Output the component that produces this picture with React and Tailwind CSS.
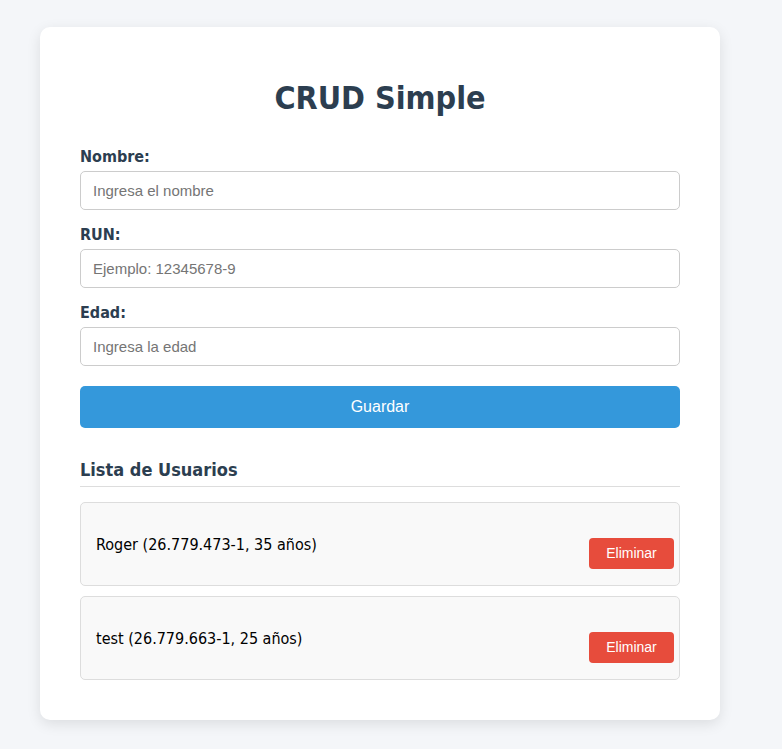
import React from "react";

const users = [
  { name: "Roger", run: "26.779.473-1", age: 35 },
  { name: "test", run: "26.779.663-1", age: 25 },
];

function Field({ label, placeholder }) {
  return (
    <div className="mb-[15px]">
      <label className="block mb-[5px] text-[16px] leading-[19px] font-bold text-[#2c3e50] [font-family:'DejaVu_Sans_Condensed','DejaVu_Sans',sans-serif]">
        {label}
      </label>
      <input
        placeholder={placeholder}
        className="w-full h-[39px] px-3 rounded-[5px] border border-[#cccccc] bg-white text-[15px] text-[#333] placeholder:text-[#757575] outline-none [font-family:'Liberation_Sans',Arial,sans-serif]"
      />
    </div>
  );
}

export default function App() {
  return (
    <div className="min-h-[749px] bg-[#f4f6f9] pt-[27px] pb-[29px]">
      <div className="ml-[40px] w-[680px] bg-white rounded-[10px] shadow-[0_4px_14px_rgba(0,0,0,0.1)] px-[40px] pt-[40px] pb-[40px]">
        <h1 className="text-center text-[32px] leading-[38px] font-bold text-[#2c3e50] mt-[12px] mb-[30px] [font-family:'DejaVu_Sans_Condensed','DejaVu_Sans',sans-serif]">
          CRUD Simple
        </h1>
        <Field label="Nombre:" placeholder="Ingresa el nombre" />
        <Field label="RUN:" placeholder="Ejemplo: 12345678-9" />
        <Field label="Edad:" placeholder="Ingresa la edad" />
        <button className="mt-[5px] w-full h-[42px] rounded-[5px] bg-[#3498db] text-white text-[16px] [font-family:'Liberation_Sans',Arial,sans-serif]">
          Guardar
        </button>
        <h2 className="mt-[31px] pb-[5px] border-b border-[#dddddd] text-[18px] leading-[22px] font-bold text-[#2c3e50] [font-family:'DejaVu_Sans_Condensed','DejaVu_Sans',sans-serif]">
          Lista de Usuarios
        </h2>
        <ul className="mt-[15px] flex flex-col gap-[10px]">
          {users.map((u) => (
            <li
              key={u.run}
              className="h-[84px] flex items-start justify-between pt-[32px] pl-[15px] pr-[5px] bg-[#f9f9f9] border border-[#dddddd] rounded-[5px]"
            >
              <span className="text-[16px] leading-[19px] text-black [font-family:'DejaVu_Sans_Condensed','DejaVu_Sans',sans-serif]">
                {u.name} ({u.run}, {u.age} años)
              </span>
              <button className="mt-[3px] h-[31px] w-[85px] rounded-[4px] bg-[#e74c3c] text-white text-[14px] [font-family:'Liberation_Sans',Arial,sans-serif]">
                Eliminar
              </button>
            </li>
          ))}
        </ul>
      </div>
    </div>
  );
}
